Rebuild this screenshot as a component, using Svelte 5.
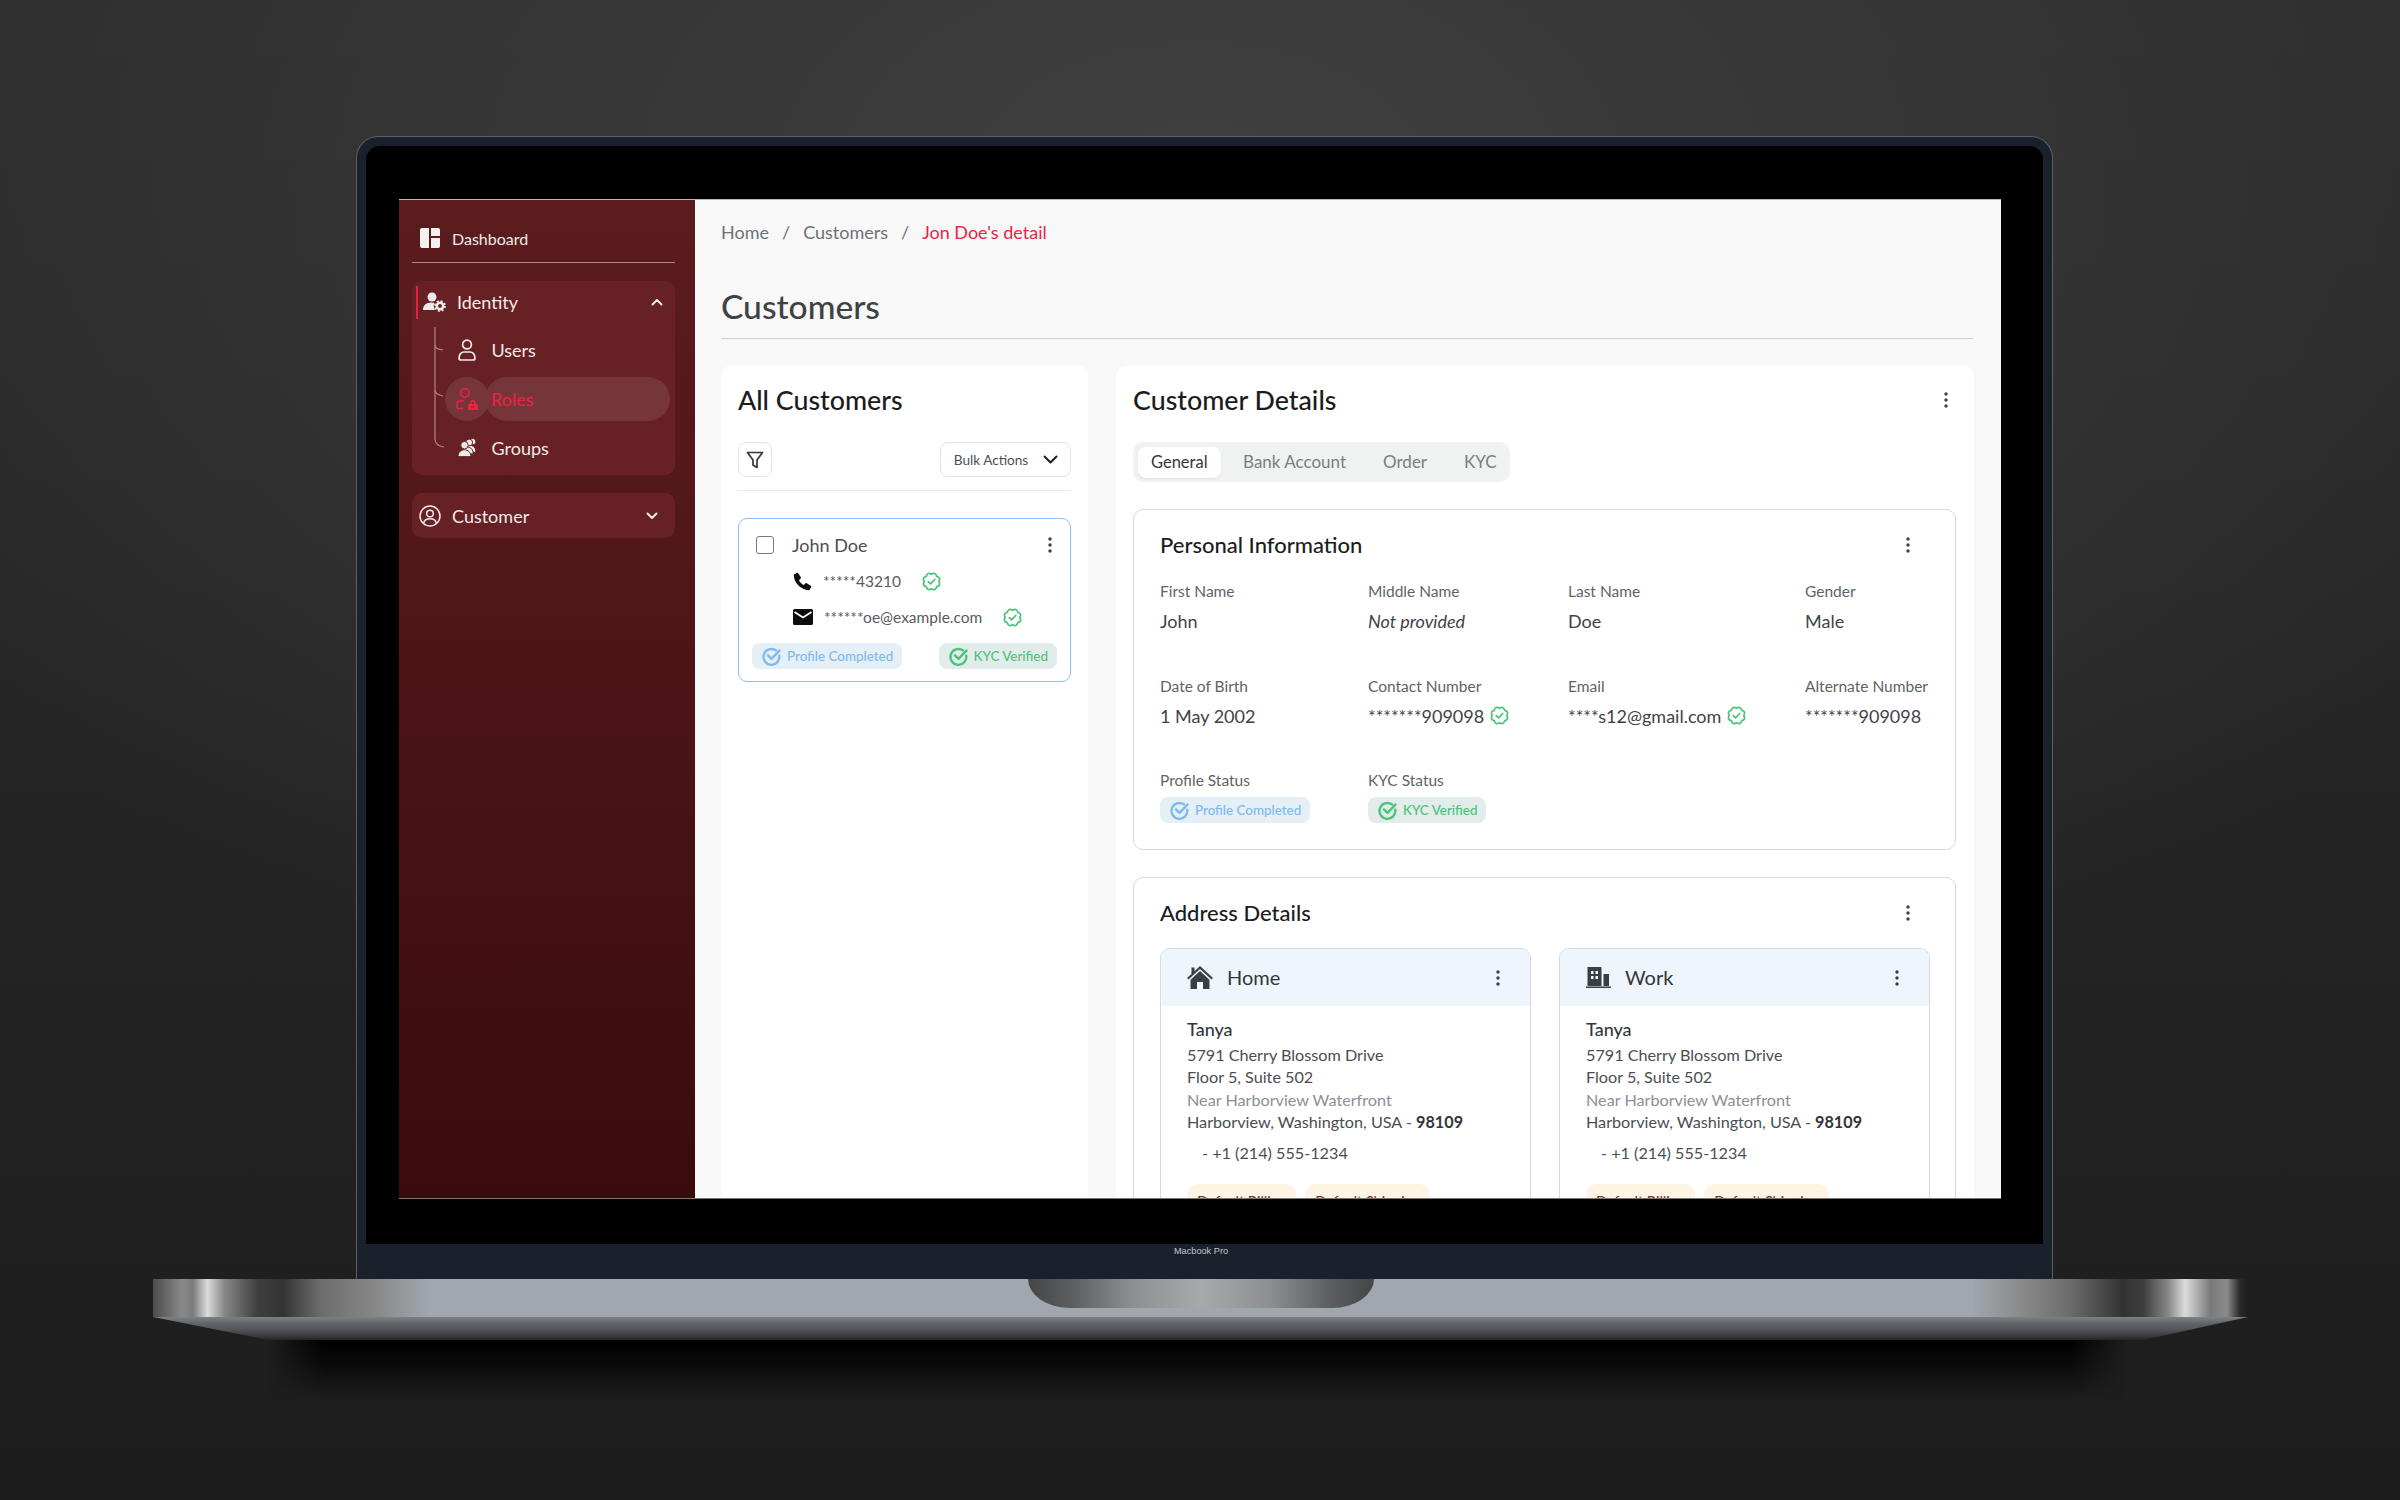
<script>
  const details = [
    { label: 'First Name', value: 'John' },
    { label: 'Middle Name', value: 'Not provided', italic: true },
    { label: 'Last Name', value: 'Doe' },
    { label: 'Gender', value: 'Male' },
    { label: 'Date of Birth', value: '1 May 2002' },
    { label: 'Contact Number', value: '*******909098', verified: true },
    { label: 'Email', value: '****s12@gmail.com', verified: true },
    { label: 'Alternate Number', value: '*******909098' }
  ];
  const addresses = [
    { name: 'Home', icon: 'home' },
    { name: 'Work', icon: 'work' }
  ];

  function scallop(cx, cy, r, bumps) {
    let d = '';
    for (let i = 0; i < bumps; i++) {
      const a = (i / bumps) * Math.PI * 2;
      const b = ((i + 0.5) / bumps) * Math.PI * 2;
      const c = ((i + 1) / bumps) * Math.PI * 2;
      const p = (t, k) => `${(cx + Math.cos(t) * k).toFixed(2)} ${(cy + Math.sin(t) * k).toFixed(2)}`;
      if (i === 0) d += `M${p(a, r)}`;
      d += `Q${p(b, r * 1.42)} ${p(c, r)}`;
    }
    return d + 'Z';
  }
  const badgePath = scallop(12, 12, 8.4, 8);
</script>

{#snippet kebab()}
  <svg class="kebab" width="4" height="16" viewBox="0 0 4 16" aria-hidden="true">
    <circle cx="2" cy="2" r="1.7" /><circle cx="2" cy="8" r="1.7" /><circle cx="2" cy="14" r="1.7" />
  </svg>
{/snippet}

{#snippet badge()}
  <svg class="badge" width="21" height="21" viewBox="0 0 24 24" fill="none" stroke="#4cc27a" stroke-width="2" stroke-linecap="round" stroke-linejoin="round" aria-hidden="true">
    <path d={badgePath} /><path d="M8.3 12.2l2.6 2.5 4.8-5" />
  </svg>
{/snippet}

{#snippet statusIcon()}
  <svg width="19" height="19" viewBox="0 0 24 24" fill="none" stroke="currentColor" stroke-width="3" stroke-linecap="round" stroke-linejoin="round" aria-hidden="true">
    <path d="M17.5 4.2A10 10 0 1 0 21.8 11" /><path d="M7.5 10.5l4.5 4.5 10-10.5" />
  </svg>
{/snippet}

{#snippet statusChips()}
  <span class="chip blue">{@render statusIcon()}Profile Completed</span>
{/snippet}

{#snippet kycChip()}
  <span class="chip green">{@render statusIcon()}KYC Verified</span>
{/snippet}

<div class="stage">
  <div class="lid">
    <div class="screen">
      <div class="app">
        <aside class="sidebar">
          <div class="dash">
            <svg width="20" height="20" viewBox="0 0 20 20" fill="#f4f1f1" aria-hidden="true">
              <path d="M2 0h7v20H2a2 2 0 0 1-2-2V2a2 2 0 0 1 2-2z" /><path d="M11 0h7a2 2 0 0 1 2 2v6h-9z" /><path d="M11 10h9v8a2 2 0 0 1-2 2h-7z" />
            </svg>
            <span>Dashboard</span>
          </div>

          <div class="group identity">
            <div class="group-head">
              <span class="redbar"></span>
              <svg width="24" height="20" viewBox="0 0 24 20" fill="#efeaea" aria-hidden="true">
                <circle cx="10" cy="5" r="4.500" />
                <path d="M1 18c0-4.400 3-7.400 8-7.400 1.300 0 2.300.2 3.200.5-.7 2.200-.4 4.900.7 6.900z" />
                <circle cx="18" cy="14" r="3.200" fill="none" stroke="#efeaea" stroke-width="2.500" />
                <circle cx="18" cy="14" r="5" fill="none" stroke="#efeaea" stroke-width="1.800" stroke-dasharray="2 1.930" />
              </svg>
              <span class="group-label">Identity</span>
              <svg class="chev up" width="12" height="8" viewBox="0 0 12 8" fill="none" stroke="#efeaea" stroke-width="2" stroke-linecap="round" stroke-linejoin="round" aria-hidden="true"><path d="M1.500 6.500L6 2l4.500 4.500" /></svg>
            </div>
            <div class="tree">
              <svg class="tree-lines" width="12" height="122" viewBox="0 0 12 122" fill="none" stroke="#b08486" stroke-width="1.200" aria-hidden="true">
                <path d="M1 0V112c0 4 3 7 9 8" /><path d="M1 18c0 3 3 4.500 8 5" /><path d="M1 63c0 3 3 5 8 6" />
              </svg>
              <div class="sub">
                <svg width="18" height="22" viewBox="0 0 18 22" fill="none" stroke="#efeaea" stroke-width="1.700" aria-hidden="true">
                  <circle cx="9" cy="5.500" r="4.400" /><path d="M1 19c0-3.600 2.400-6 5-6h6c2.600 0 5 2.400 5 6 0 1.500-.8 2-2 2H3c-1.200 0-2-.5-2-2z" />
                </svg>
                <span>Users</span>
              </div>
              <div class="sub active">
                <span class="circle">
                  <svg width="22" height="22" viewBox="0 0 22 22" fill="none" stroke="#ee2244" stroke-width="1.600" aria-hidden="true">
                    <circle cx="9" cy="5" r="4.200" /><path d="M8 13H4c-2 0-3 1.200-3 3v3.500c0 .6.500 1 1 1h5" />
                    <path fill-rule="evenodd" fill="#ee2244" stroke="none" d="M13 16h8a1 1 0 0 1 1 1v4a1 1 0 0 1-1 1h-8a1 1 0 0 1-1-1v-4a1 1 0 0 1 1-1zM15.500 18.200v1.600h3v-1.600z" />
                    <path stroke-width="1.400" d="M14.800 16v-1a2.200 2.200 0 0 1 4.400 0v1" />
                  </svg>
                </span>
                <span class="pill">Roles</span>
              </div>
              <div class="sub groups">
                <svg width="20" height="19" viewBox="0 0 20 19" fill="#efeaea" stroke="#672023" stroke-width="0.900" aria-hidden="true">
                  <g transform="translate(7.500 -1.500) rotate(14 6 10)">
                    <circle cx="6" cy="5" r="3.200" /><path d="M.5 15c.2-3.600 2.400-6 5.500-6s5.300 2.400 5.500 6z" />
                  </g>
                  <g transform="translate(4.500 -.5) rotate(8 6 10)">
                    <circle cx="6" cy="5" r="3.400" /><path d="M.5 16c.2-3.800 2.400-6.300 5.500-6.300s5.300 2.500 5.500 6.300z" />
                  </g>
                  <circle cx="6.500" cy="7.200" r="3.700" /><path d="M0 18.600c.2-4.200 2.800-6.800 6.500-6.800s6.300 2.600 6.500 6.800z" />
                </svg>
                <span>Groups</span>
              </div>
            </div>
          </div>

          <div class="group customer">
            <svg width="22" height="22" viewBox="0 0 22 22" fill="none" stroke="#efeaea" stroke-width="1.500" aria-hidden="true">
              <circle cx="11" cy="11" r="10" /><circle cx="11" cy="8.500" r="3.300" /><path d="M4.500 18.500c.6-3 3-4.700 6.500-4.700s5.900 1.700 6.500 4.700" />
            </svg>
            <span class="group-label">Customer</span>
            <svg class="chev" width="12" height="8" viewBox="0 0 12 8" fill="none" stroke="#efeaea" stroke-width="2" stroke-linecap="round" stroke-linejoin="round" aria-hidden="true"><path d="M1.500 1.500L6 6l4.500-4.500" /></svg>
          </div>
        </aside>

        <main class="main">
          <nav class="crumbs">
            <span>Home</span><i>/</i><span>Customers</span><i>/</i><span class="current">Jon Doe's detail</span>
          </nav>
          <h1>Customers</h1>

          <div class="columns">
            <section class="card list">
              <h2>All Customers</h2>
              <div class="toolbar">
                <button class="tool filter" aria-label="Filter">
                  <svg width="18" height="18" viewBox="0 0 18 18" fill="none" stroke="#33373a" stroke-width="1.700" stroke-linejoin="round" aria-hidden="true"><path d="M1.500 1.500h15L11 9v7.500L7 14V9z" /></svg>
                </button>
                <button class="tool bulk">
                  <span>Bulk Actions</span>
                  <svg width="15" height="9" viewBox="0 0 15 9" fill="none" stroke="#1d1f21" stroke-width="2" stroke-linecap="round" stroke-linejoin="round" aria-hidden="true"><path d="M1.500 1.500L7.500 7.500l6-6" /></svg>
                </button>
              </div>

              <article class="person">
                <div class="person-head">
                  <span class="check"></span>
                  <span class="person-name">John Doe</span>
                  {@render kebab()}
                </div>
                <div class="contact first">
                  <svg width="19" height="19" viewBox="0 0 24 24" fill="#0d0d0d" aria-hidden="true"><path d="M6.600 1.500l3.300 5.200c.3.5.2 1.100-.2 1.500L7.500 10.400c1.300 2.700 3.400 4.900 6.100 6.100l2.200-2.200c.4-.4 1-.5 1.500-.2l5.200 3.300c.5.3.7.9.5 1.400l-1.500 3.100c-.3.600-.9 1-1.600 1C10.600 23 1 13.400 1 4.100c0-.7.400-1.300 1-1.600L5.200 1c.5-.2 1.100 0 1.400.5z" /></svg>
                  <span>*****43210</span>
                  {@render badge()}
                </div>
                <div class="contact">
                  <svg width="20" height="16" viewBox="0 0 20 16" aria-hidden="true"><path fill="#0d0d0d" d="M1.500 0h17A1.500 1.500 0 0 1 20 1.500v13a1.500 1.500 0 0 1-1.500 1.500h-17A1.500 1.500 0 0 1 0 14.500v-13A1.500 1.500 0 0 1 1.500 0z" /><path fill="none" stroke="#fff" stroke-width="1.800" d="M1.500 3l8.500 5.500L18.500 3" /></svg>
                  <span>******oe@example.com</span>
                  {@render badge()}
                </div>
                <div class="person-chips">
                  {@render statusChips()}
                  {@render kycChip()}
                </div>
              </article>
            </section>

            <section class="card detail">
              <div class="row-head detail-head">
                <h2>Customer Details</h2>
                {@render kebab()}
              </div>
              <div class="tabs">
                <span class="tab active">General</span>
                <span class="tab">Bank Account</span>
                <span class="tab">Order</span>
                <span class="tab">KYC</span>
              </div>

              <div class="box">
                <div class="row-head">
                  <h3>Personal Information</h3>
                  {@render kebab()}
                </div>
                <div class="grid">
                  {#each details as d}
                    <div class="field">
                      <div class="label">{d.label}</div>
                      <div class="value" class:italic={d.italic}>
                        {d.value}
                        {#if d.verified}{@render badge()}{/if}
                      </div>
                    </div>
                  {/each}
                  <div class="field">
                    <div class="label">Profile Status</div>
                    <div class="status">{@render statusChips()}</div>
                  </div>
                  <div class="field">
                    <div class="label">KYC Status</div>
                    <div class="status">{@render kycChip()}</div>
                  </div>
                </div>
              </div>

              <div class="box address">
                <div class="row-head">
                  <h3>Address Details</h3>
                  {@render kebab()}
                </div>
                <div class="addresses">
                  {#each addresses as a}
                    <div class="addr">
                      <div class="addr-head">
                        {#if a.icon === 'home'}
                          <svg width="26" height="23" viewBox="0 0 26 23" fill="#3a3f44" aria-hidden="true">
                            <path d="M13 0L26 12l-1.500 1.600L13 3 1.500 13.600 0 12l4.500-4.100V1.500h3v3.700z" /><path d="M3.500 13.800L13 5l9.500 8.800V23H16v-7h-6v7H3.500z" />
                          </svg>
                        {:else}
                          <svg width="25" height="21" viewBox="0 0 25 21" fill="#3a3f44" aria-hidden="true">
                            <path fill-rule="evenodd" d="M1.500 0h14v19h-14zM5 4v3h2.500V4zM9.500 4v3H12V4zM5 9v3h2.500V9zM9.500 9v3H12V9z" /><path d="M17.500 7H23v12h-5.500zM0 19.500h25V21H0z" />
                          </svg>
                        {/if}
                        <span class="addr-name">{a.name}</span>
                        {@render kebab()}
                      </div>
                      <div class="addr-body">
                        <div class="addr-person">Tanya</div>
                        <div class="addr-lines">
                          <div>5791 Cherry Blossom Drive</div>
                          <div>Floor 5, Suite 502</div>
                          <div class="muted">Near Harborview Waterfront</div>
                          <div>Harborview, Washington, USA - <b>98109</b></div>
                        </div>
                        <div class="addr-phone">- +1 (214) 555-1234</div>
                        <div class="addr-tags">
                          <span class="tag">Default Billing</span>
                          <span class="tag">Default Shipping</span>
                        </div>
                      </div>
                    </div>
                  {/each}
                </div>
              </div>
            </section>
          </div>
        </main>
      </div>
    </div>
    <div class="brand">Macbook Pro</div>
  </div>

  <div class="base">
    <div class="notch"></div>
  </div>
  <div class="lip"></div>
  <div class="shadow"></div>
</div>

<style>
  :global(body) {
    margin: 0;
    background: #1c1c1c;
  }
  .stage {
    width: 2400px;
    height: 1500px;
    overflow: hidden;
    padding-top: 136px;
    box-sizing: border-box;
    font-family: Lato, "Open Sans", sans-serif;
    background:
      radial-gradient(ellipse 1500px 900px at 50% 12%, #404040 0%, #383838 35%, rgba(40, 40, 40, 0) 100%),
      linear-gradient(180deg, #2c2c2c 0%, #252525 50%, #1d1d1d 100%);
  }
  .lid {
    width: 1697px;
    height: 1143px;
    margin-left: 356px;
    box-sizing: border-box;
    padding: 9px 9px 0;
    background: #1a202c;
    border: 1px solid #5c6066;
    border-bottom: none;
    border-radius: 22px 22px 0 0;
  }
  .screen {
    height: 1098px;
    box-sizing: border-box;
    padding: 54px 42px 46px 33px;
    background: #000;
    border-radius: 14px 14px 0 0;
  }
  .app {
    display: flex;
    height: 998px;
    overflow: hidden;
    background: #f8f8f8;
    box-shadow: 0 -1px 0 #b9bdbd, 0 1px 0 #777;
  }
  .brand {
    text-align: center;
    font-family: "Liberation Sans", sans-serif;
    font-size: 9.200px;
    line-height: 12px;
    color: #c4c7cc;
    padding: 1px 7px 0 0;
  }

  .base {
    display: flex;
    justify-content: center;
    width: 2095px;
    height: 38px;
    margin-left: 153px;
    background: linear-gradient(90deg, #4c4c4c 0%, #8a8a8a 1.400%, #7a7a7a 1.900%, #dcdcdc 2.600%, #888 3.400%, #3e3e3e 5%, #333 6.200%, #6c6c6c 8%, #8a8a8a 10.800%, #a1a7ae 13.200%, #a1a7ae 86.800%, #8a8a8a 89.200%, #6c6c6c 91.500%, #333 94%, #3e3e3e 95%, #888 96.200%, #dcdcdc 97%, #7a7a7a 98.200%, #8a8a8a 99%, #2a2a2a 99.600%, #1c1c1c 100%);
  }
  .notch {
    width: 346px;
    height: 29px;
    border-radius: 0 0 42px 42px / 0 0 29px 29px;
    background: linear-gradient(90deg, #454545 0%, #5a5d60 12%, #8c8f92 30%, #a8a9aa 50%, #8c8f92 70%, #5a5d60 88%, #454545 100%);
  }
  .lip {
    width: 2095px;
    height: 23px;
    margin-left: 153px;
    clip-path: polygon(0 0, 100% 0, 95% 100%, 5.500% 100%);
    background: linear-gradient(180deg, #7d8185 0%, #5f6469 30%, #55595d 50%, #3c3d3f 80%, #252526 100%);
  }
  .shadow {
    width: 1858px;
    height: 60px;
    margin-left: 268px;
    background: linear-gradient(180deg, #000 0%, #0a0a0a 40%, rgba(20, 20, 20, 0) 100%);
    mask-image: linear-gradient(90deg, transparent 0%, #000 3%, #000 97%, transparent 100%);
  }

  .sidebar {
    flex: 0 0 296px;
    box-sizing: border-box;
    padding: 0 20px 0 13px;
    background: linear-gradient(180deg, #5b1c1e 0%, #521719 35%, #3a0b0d 100%);
    color: #efeaea;
  }
  .dash {
    display: flex;
    align-items: center;
    gap: 12px;
    height: 48px;
    padding: 14px 0 0 8px;
    font-size: 16px;
    border-bottom: 1px solid #ad8a8a;
  }
  .group {
    background: #672023;
    border-radius: 10px;
  }
  .identity {
    height: 194px;
    margin-top: 18px;
  }
  .group-head {
    display: flex;
    align-items: center;
    height: 42px;
    padding: 0 12px 0 4px;
  }
  .redbar {
    width: 2px;
    height: 33px;
    margin-right: 4px;
    background: #e8203c;
  }
  .group-label {
    flex: 1;
    font-size: 18px;
    margin-left: 11px;
  }
  .tree {
    position: relative;
    padding: 2px 5px 0 33px;
  }
  .tree-lines {
    position: absolute;
    left: 22px;
    top: 4px;
  }
  .sub {
    display: flex;
    align-items: center;
    height: 49px;
    padding-left: 13px;
    font-size: 18px;
    gap: 15.500px;
  }
  .sub.groups svg {
    margin-right: -2px;
  }
  .sub.active {
    padding-left: 0;
    gap: 0;
    color: #ee2244;
  }
  .circle {
    flex: 0 0 44px;
    height: 44px;
    display: flex;
    align-items: center;
    justify-content: center;
    border-radius: 50%;
    background: #763639;
  }
  .pill {
    flex: 1;
    height: 44px;
    line-height: 44px;
    margin-left: -4px;
    padding-left: 6px;
    border-radius: 22px;
    background: #763639;
  }
  .customer {
    display: flex;
    align-items: center;
    height: 45px;
    margin-top: 18px;
    padding: 0 17px 0 7px;
  }

  .main {
    flex: 1;
    min-width: 0;
    box-sizing: border-box;
    padding: 20px 28px 0 26px;
  }
  .crumbs {
    display: flex;
    height: 24px;
    align-items: center;
    font-size: 18px;
    color: #6e7276;
  }
  .crumbs i {
    font-style: normal;
    margin: 0 13px;
  }
  .current {
    color: #ee2244;
  }
  h1 {
    margin: 40px 0 0;
    padding-bottom: 10px;
    font-size: 33.600px;
    line-height: 44px;
    font-weight: 500;
    color: #3f4245;
    border-bottom: 1px solid #cfd0d0;
  }
  .columns {
    display: grid;
    grid-template-columns: 367px 858px;
    gap: 28px;
    margin-top: 27px;
  }
  .card {
    min-height: 900px;
    box-sizing: border-box;
    padding: 19px 17px;
    background: #fff;
    border-radius: 10px;
  }
  h2 {
    margin: 0;
    font-size: 26.800px;
    line-height: 30px;
    font-weight: 500;
    color: #1c1c1c;
  }
  h3 {
    margin: 0;
    font-size: 22px;
    line-height: 30px;
    font-weight: 500;
    color: #1c1c1c;
  }
  .toolbar {
    display: flex;
    justify-content: space-between;
    margin-top: 27px;
    padding-bottom: 13px;
    border-bottom: 1px solid #e3ebeb;
  }
  .tool {
    display: flex;
    align-items: center;
    justify-content: center;
    height: 35px;
    box-sizing: border-box;
    padding: 0;
    background: #fff;
    border: 1.500px solid #dfe6e6;
    border-radius: 8px;
    font-family: inherit;
  }
  .filter {
    width: 34px;
  }
  .bulk {
    width: 131px;
    gap: 15px;
    padding-left: 1px;
    font-size: 13.600px;
    color: #4c5054;
  }
  .person {
    box-sizing: border-box;
    height: 164px;
    margin-top: 27px;
    padding: 15px 13px 0;
    border: 1.500px solid #8cc3f0;
    border-radius: 9px;
  }
  .person-head {
    display: flex;
    align-items: center;
    height: 22px;
    padding: 0 5px 0 4px;
    gap: 18px;
  }
  .check {
    width: 18px;
    height: 18px;
    box-sizing: border-box;
    border: 1.500px solid #777b7e;
    border-radius: 3px;
  }
  .person-name {
    flex: 1;
    font-size: 18px;
    color: #4a4e52;
  }
  .kebab {
    display: block;
    fill: #3c4044;
    flex: none;
  }
  .contact {
    display: flex;
    align-items: center;
    height: 22px;
    margin: 14px 0 0 41px;
    font-size: 15.500px;
    color: #585c60;
  }
  .contact.first {
    margin-top: 14px;
  }
  .contact span {
    margin: 0 20px 0 11px;
  }
  .contact .badge {
    flex: none;
  }
  .person-chips {
    display: flex;
    justify-content: space-between;
    margin-top: 15px;
  }
  .chip {
    display: inline-flex;
    align-items: center;
    gap: 6px;
    height: 26px;
    padding: 0 9px 0 10px;
    border-radius: 8px;
    font-size: 13.400px;
    font-weight: 500;
    white-space: nowrap;
  }
  .chip.blue {
    color: #7fbaf0;
    background: #e4eff6;
  }
  .chip.green {
    color: #4cc27a;
    background: #e2ecea;
  }

  .row-head {
    display: flex;
    align-items: center;
    justify-content: space-between;
    padding-right: 20.500px;
  }
  .detail-head {
    padding-right: 9px;
  }
  .tabs {
    display: flex;
    align-items: center;
    width: 377px;
    height: 40px;
    margin-top: 27px;
    box-sizing: border-box;
    padding-left: 5px;
    background: #f0f2f2;
    border-radius: 10px;
  }
  .tab {
    padding: 0 18.500px 1px;
    font-size: 17px;
    line-height: 30px;
    color: #7a7e82;
    white-space: nowrap;
  }
  .tab.active {
    padding: 0 13px 1px;
    margin-right: 4px;
    font-size: 16.500px;
    color: #33373a;
    background: #fff;
    border-radius: 8px;
    box-shadow: 0 1px 2px rgba(0, 0, 0, 0.07);
  }
  .box {
    box-sizing: border-box;
    width: 823px;
    height: 341px;
    margin-top: 27px;
    padding: 20px 25px 0 26px;
    border: 1.500px solid #d4dada;
    border-radius: 10px;
  }
  .grid {
    display: grid;
    grid-template-columns: 208px 200px 237px 1fr;
    row-gap: 42.500px;
    margin-top: 21px;
  }
  .label {
    font-size: 15.500px;
    line-height: 20px;
    color: #5f6368;
  }
  .value {
    display: flex;
    align-items: center;
    gap: 5px;
    height: 24px;
    margin-top: 8px;
    font-size: 18px;
    color: #3e4347;
    white-space: nowrap;
  }
  .italic {
    font-style: italic;
  }
  .status {
    margin-top: 7px;
  }
  .address {
    height: auto;
    padding-bottom: 40px;
  }
  .addresses {
    display: grid;
    grid-template-columns: 371px 371px;
    gap: 28px;
    margin-top: 20px;
  }
  .addr {
    border: 1.500px solid #d4dada;
    border-radius: 10px;
    overflow: hidden;
  }
  .addr-head {
    display: flex;
    align-items: center;
    height: 57px;
    padding: 0 30.500px 0 26px;
    gap: 14px;
    background: #eff5fc;
  }
  .addr-name {
    flex: 1;
    padding-bottom: 2px;
    font-size: 20px;
    color: #33373a;
  }
  .addr-body {
    padding: 12px 26px 30px;
    color: #4a4e52;
    font-size: 16.200px;
  }
  .addr-person {
    font-size: 18px;
    line-height: 22px;
    font-weight: 500;
    color: #33373a;
  }
  .addr-lines {
    margin-top: 4px;
    line-height: 22.300px;
  }
  .addr-lines b {
    color: #33373a;
  }
  .muted {
    color: #8a9096;
  }
  .addr-phone {
    margin-top: 9px;
    padding-left: 15px;
    line-height: 22px;
  }
  .addr-tags {
    display: flex;
    gap: 9px;
    margin-top: 20px;
  }
  .tag {
    padding: 8px 10px;
    background: #fdf4e3;
    border-radius: 10px;
    font-size: 14.400px;
    line-height: 20px;
    color: #7a3030;
  }
</style>
